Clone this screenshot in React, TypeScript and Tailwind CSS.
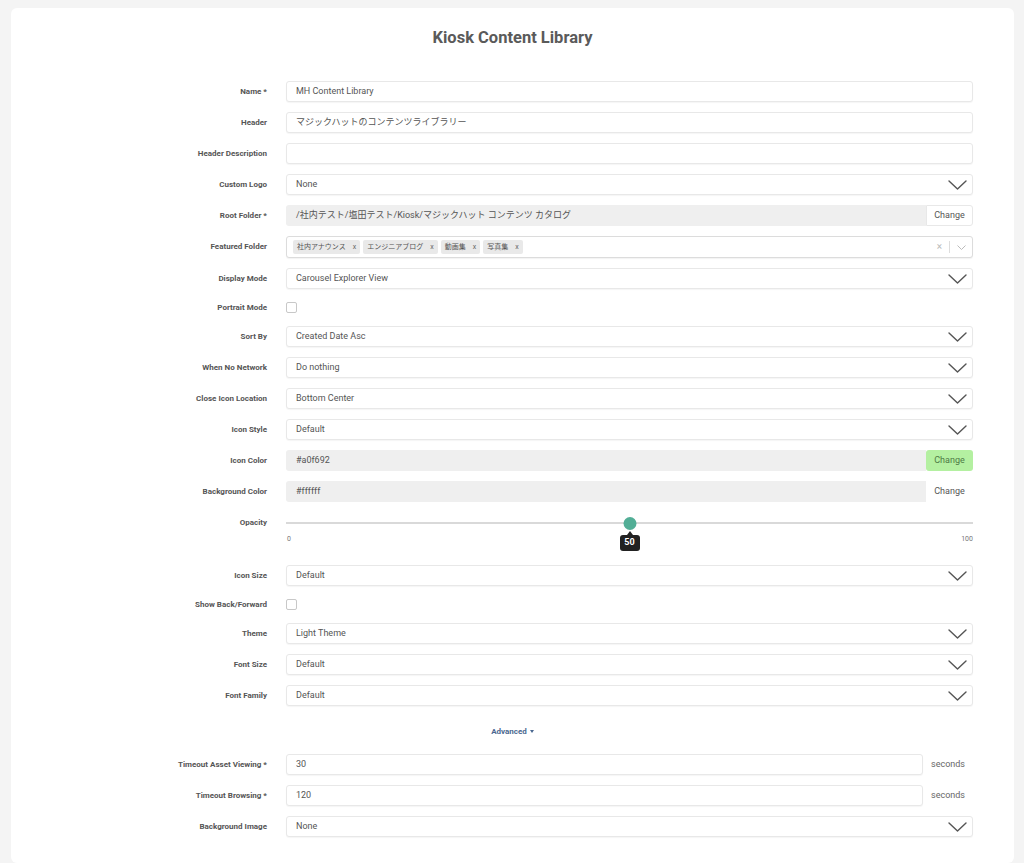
import React from 'react';

const font = { fontFamily: 'Roboto, "Noto Sans CJK JP", sans-serif' };

function Chevron() {
  return (
    <svg width="19" height="10" viewBox="0 0 19 10" fill="none">
      <path d="M1 1L9.5 9L18 1" stroke="#555" strokeWidth="1.4" strokeLinecap="round" strokeLinejoin="round" />
    </svg>
  );
}

function Row({ label, children, align = 'center' }: { label: string; children: React.ReactNode; align?: 'center' | 'start' }) {
  return (
    <div className={align === 'center' ? 'flex items-center' : 'flex items-start'}>
      <label
        className={
          'w-[256px] shrink-0 text-right text-[8px] font-bold leading-[10px] text-[#555] ' +
          (align === 'start' ? 'pt-[6px]' : '')
        }
      >
        {label}
      </label>
      <div className="ml-[19px] flex-1 min-w-0">{children}</div>
    </div>
  );
}

function TextInput({ value }: { value: string }) {
  return (
    <div className="flex h-[21px] items-center rounded-[3px] border border-[#e8e8e8] bg-white pl-[9px] text-[9px] text-[#555] shadow-[0_1px_1px_rgba(0,0,0,0.04)]">
      {value}
    </div>
  );
}

function Select({ value }: { value: string }) {
  return (
    <div className="flex h-[21px] items-center justify-between rounded-[3px] border border-[#e8e8e8] bg-white pl-[9px] pr-[5px] text-[9px] text-[#555] shadow-[0_1px_1px_rgba(0,0,0,0.04)]">
      <span>{value}</span>
      <Chevron />
    </div>
  );
}

function ReadOnly({ value, button }: { value: string; button: 'bordered' | 'green' | 'plain' }) {
  const btn =
    button === 'bordered'
      ? 'border border-[#e8e8e8] bg-white text-[#555] rounded-r-[3px]'
      : button === 'green'
      ? 'bg-[#b4f0a1] text-[#4e7a45] rounded-[3px]'
      : 'bg-white text-[#555]';
  return (
    <div className="flex h-[21px] items-stretch">
      <div className="flex flex-1 items-center rounded-l-[3px] bg-[#efefef] pl-[10px] text-[9px] text-[#555]">{value}</div>
      <div className={'flex w-[47px] items-center justify-center text-[9px] ' + btn}>Change</div>
    </div>
  );
}

function Checkbox() {
  return (
    <div className="flex h-[17px] items-center">
      <div className="h-[11px] w-[11px] rounded-[2px] border border-[#c8c8c8] bg-white" />
    </div>
  );
}

function Tag({ text }: { text: string }) {
  return (
    <div className="flex h-[14px] items-center gap-[7px] rounded-[2px] bg-[#e9e9e9] px-[4px] text-[7px] text-[#555]">
      <span>{text}</span>
      <span className="text-[7px] text-[#666]">x</span>
    </div>
  );
}

function MultiSelect() {
  return (
    <div className="flex h-[22px] items-center justify-between rounded-[3px] border border-[#dcdcdc] bg-white pl-[6px] pr-[6px] shadow-[0_1px_1px_rgba(0,0,0,0.05)]">
      <div className="flex items-center gap-[3px]">
        <Tag text="社内アナウンス" />
        <Tag text="エンジニアブログ" />
        <Tag text="動画集" />
        <Tag text="写真集" />
      </div>
      <div className="flex items-center">
        <span className="text-[10px] leading-none text-[#bbb]">×</span>
        <div className="mx-[7px] h-[12px] w-px bg-[#ddd]" />
        <svg width="9" height="5" viewBox="0 0 9 5" fill="none">
          <path d="M0.5 0.5L4.5 4.5L8.5 0.5" stroke="#bbb" strokeWidth="1" />
        </svg>
      </div>
    </div>
  );
}

function Slider() {
  return (
    <div className="relative h-[43px]">
      <div className="absolute left-0 right-0 top-[10px] h-[2px] bg-[#d9d9d9]" />
      <div className="absolute left-1/2 top-[5px] h-[13px] w-[13px] -translate-x-1/2 rounded-full bg-[#52ae96]" />
      <div className="absolute left-1/2 top-[19px] h-0 w-0 -translate-x-1/2 border-x-[3px] border-b-[4px] border-x-transparent border-b-[#222]" />
      <div className="absolute left-1/2 top-[23px] flex h-[16px] w-[20px] -translate-x-1/2 items-center justify-center rounded-[3px] bg-[#222] text-[9px] font-bold text-white">
        50
      </div>
      <div className="absolute left-[1px] top-[22px] text-[7px] text-[#777]">0</div>
      <div className="absolute right-0 top-[22px] text-[7px] text-[#777]">100</div>
    </div>
  );
}

function WithSeconds({ value }: { value: string }) {
  return (
    <div className="flex items-center">
      <div className="flex-1">
        <TextInput value={value} />
      </div>
      <span className="w-[50px] shrink-0 pl-[8px] text-[9px] text-[#666]">seconds</span>
    </div>
  );
}

export default function App() {
  return (
    <div className="min-h-screen bg-[#f4f4f4] pl-[11px] pr-[10px] pt-[8px]" style={font}>
      <div className="min-h-[855px] rounded-[6px] bg-white pt-[20px]">
        <h1 className="text-center text-[16.5px] font-bold leading-[20px] text-[#5a5a5a]">Kiosk Content Library</h1>
        <div className="mt-[33px] flex flex-col gap-[10px] pr-[41px]">
          <Row label="Name *"><TextInput value="MH Content Library" /></Row>
          <Row label="Header"><TextInput value="マジックハットのコンテンツライブラリー" /></Row>
          <Row label="Header Description"><TextInput value="" /></Row>
          <Row label="Custom Logo"><Select value="None" /></Row>
          <Row label="Root Folder *">
            <ReadOnly value="/社内テスト/塩田テスト/Kiosk/マジックハット コンテンツ カタログ" button="bordered" />
          </Row>
          <Row label="Featured Folder"><MultiSelect /></Row>
          <Row label="Display Mode"><Select value="Carousel Explorer View" /></Row>
          <Row label="Portrait Mode"><Checkbox /></Row>
          <Row label="Sort By"><Select value="Created Date Asc" /></Row>
          <Row label="When No Network"><Select value="Do nothing" /></Row>
          <Row label="Close Icon Location"><Select value="Bottom Center" /></Row>
          <Row label="Icon Style"><Select value="Default" /></Row>
          <Row label="Icon Color"><ReadOnly value="#a0f692" button="green" /></Row>
          <Row label="Background Color"><ReadOnly value="#ffffff" button="plain" /></Row>
          <Row label="Opacity" align="start"><Slider /></Row>
          <Row label="Icon Size"><Select value="Default" /></Row>
          <Row label="Show Back/Forward"><Checkbox /></Row>
          <Row label="Theme"><Select value="Light Theme" /></Row>
          <Row label="Font Size"><Select value="Default" /></Row>
          <Row label="Font Family"><Select value="Default" /></Row>
        </div>
        <div className="flex h-[48px] items-center justify-center gap-[3px] pt-[3px] text-[8px] font-bold text-[#4a6890]">
          <span>Advanced</span>
          <span className="h-0 w-0 border-x-[2.5px] border-t-[3px] border-x-transparent border-t-[#4a6890]" />
        </div>
        <div className="flex flex-col gap-[10px] pr-[41px]">
          <Row label="Timeout Asset Viewing *"><WithSeconds value="30" /></Row>
          <Row label="Timeout Browsing *"><WithSeconds value="120" /></Row>
          <Row label="Background Image"><Select value="None" /></Row>
        </div>
      </div>
    </div>
  );
}
